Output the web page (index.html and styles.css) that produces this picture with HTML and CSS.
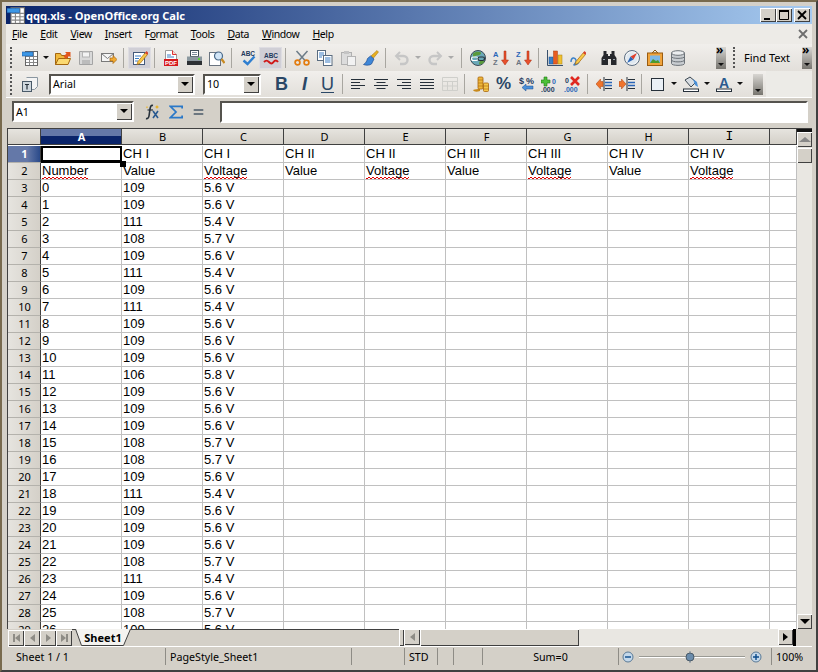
FILE: index.html
```html
<!DOCTYPE html>
<html lang="en">
<head>
    <meta charset="UTF-8">
    <title>qqq.xls - OpenOffice.org Calc</title>
    <link rel="stylesheet" href="styles.css">
</head>
<body>
    <svg class="defs" width="0" height="0">
        <symbol id="i-sheet" viewBox="0 0 16 16">
            <rect x="3.5" y="1.5" width="12" height="14" fill="#fff" stroke="#666"/>
            <path d="M7.5 2v13M11.5 2v13M4 6.5h11M4 9.5h11M4 12.5h11" stroke="#888"/>
            <rect x="0" y="2" width="11" height="4" fill="#3c97e6" stroke="#1e5fa8" stroke-width=".6"/>
        </symbol>
    </svg>
    <div class="window">
        <div class="titlebar">
            <svg class="title-icon" width="18" height="18"><use href="#i-sheet"/></svg>
            <span class="title-text">qqq.xls - OpenOffice.org Calc</span>
            <div class="win-btns">
                <span class="win-btn"><svg width="14" height="12"><path d="M3 9h6v2H3z" fill="#000"/></svg></span>
                <span class="win-btn"><svg width="14" height="12"><path d="M2.5 2.5h9v8h-9z M2 1.5h10" fill="none" stroke="#000"/><path d="M2 1h10v2H2z" fill="#000"/></svg></span>
                <span class="win-btn close"><svg width="14" height="12"><path d="M3 2l8 8M11 2l-8 8" stroke="#000" stroke-width="1.8"/></svg></span>
            </div>
        </div>

        <div class="menubar">
            <span class="menu-item"><u>F</u>ile</span>
            <span class="menu-item"><u>E</u>dit</span>
            <span class="menu-item"><u>V</u>iew</span>
            <span class="menu-item"><u>I</u>nsert</span>
            <span class="menu-item">F<u>o</u>rmat</span>
            <span class="menu-item"><u>T</u>ools</span>
            <span class="menu-item"><u>D</u>ata</span>
            <span class="menu-item"><u>W</u>indow</span>
            <span class="menu-item"><u>H</u>elp</span>
            <svg class="menu-close" width="10" height="10"><path d="M1 1l8 8M9 1l-8 8" stroke="#6e6e6e" stroke-width="1.8"/></svg>
        </div>

        <div class="toolbar">
            <div class="grip"></div>
            <span class="tb"><svg width="16" height="16"><use href="#i-sheet"/></svg></span>
            <span class="drop"></span>
            <span class="tb"><svg width="16" height="16" viewBox="0 0 16 16"><path d="M.5 3.5h5l1 2h6v9H.5z" fill="#f0b93c" stroke="#a4660f"/><path d="M3.5 8.5h12l-2.5 6H.5z" fill="#fbd971" stroke="#a4660f"/><path d="M8.5 6.5l3-3L10 2h5.5v5.5L14 6l-3 3z" fill="#e2561c"/></svg></span>
            <span class="tb"><svg width="16" height="16" viewBox="0 0 16 16"><path d="M1.5 1.5h13v13h-13z" fill="#d9d9d9" stroke="#a4a4a4"/><rect x="4.5" y="2" width="7" height="5" fill="#f3f3f3" stroke="#b4b4b4"/><rect x="4" y="10" width="8" height="4" fill="#bcbcbc"/></svg></span>
            <span class="tb"><svg width="16" height="16" viewBox="0 0 16 16"><rect x=".5" y="3.5" width="12" height="8" fill="#f5f5f5" stroke="#7a7a7a"/><path d="M.5 3.5l6 5 6-5" fill="none" stroke="#7a7a7a"/><path d="M9 8h3V5.5l4 4-4 4V11H9z" fill="#f2aa30" stroke="#a8660c" stroke-width=".7"/></svg></span>
            <span class="sep"></span>
            <span class="tb on"><svg width="16" height="16" viewBox="0 0 16 16"><rect x="1.5" y="2.5" width="11" height="12" fill="#fff" stroke="#44597a"/><path d="M3 6h6M3 8.5h4M3 11h3" stroke="#3a7cc4"/><path d="M6 11.5l7.5-9 2 2-7.5 9-3 1z" fill="#f7c94a" stroke="#a8660c" stroke-width=".7"/><path d="M13 3l1.5-2 2 2-1.5 1.8z" fill="#d8432e"/></svg></span>
            <span class="sep"></span>
            <span class="tb"><svg width="16" height="16" viewBox="0 0 16 16"><path d="M2.5.5h7l4 4v7h-11z" fill="#fff" stroke="#9a9a9a"/><path d="M9.5.5v4h4" fill="#ffd0c8" stroke="#d33"/><path d="M4 5h4M4 7h7" stroke="#3a7cc4"/><rect x="1" y="9" width="14" height="7" fill="#d6191c"/><text class="icon-text" x="8" y="14.7" font-size="6" fill="#fff" text-anchor="middle">PDF</text></svg></span>
            <span class="tb"><svg width="16" height="16" viewBox="0 0 16 16"><rect x="4.5" y=".5" width="8" height="6" fill="#fff" stroke="#3d4a55"/><path d="M6 2.5h5M6 4.5h5" stroke="#7a8a98"/><path d="M1 6.5h15v6H1z" fill="#8b989f"/><rect x="1" y="11" width="15" height="4" fill="#2c3034"/><rect x="12" y="8" width="2" height="2" fill="#5cd03c"/></svg></span>
            <span class="tb"><svg width="16" height="16" viewBox="0 0 16 16"><rect x=".5" y="2.5" width="11" height="13" fill="#fff" stroke="#6a7480"/><circle cx="9.5" cy="6" r="4" fill="#d2e6f8" stroke="#4a6a8a" stroke-width="1.2"/><path d="M12.5 9l3 4" stroke="#c98a20" stroke-width="2.2"/></svg></span>
            <span class="sep"></span>
            <span class="tb"><svg width="16" height="16" viewBox="0 0 16 16"><text class="icon-text" x="8" y="6" font-size="6.5" fill="#23395c" text-anchor="middle">ABC</text><path d="M3.5 10.5l4 3.5 7-7.5" stroke="#2f7fd0" stroke-width="2.4" fill="none"/></svg></span>
            <span class="tb on"><svg width="16" height="16" viewBox="0 0 16 16"><text class="icon-text" x="8" y="8" font-size="6.5" fill="#23395c" text-anchor="middle">ABC</text><path d="M1 12c2-2 3-2 5 0s3 2 4.5 0 3-2 4.5 0" stroke="#d01818" stroke-width="2" fill="none"/></svg></span>
            <span class="sep"></span>
            <span class="tb"><svg width="16" height="16" viewBox="0 0 16 16"><path d="M5 10.5L13.5 1M11 10.5L2.5 1" stroke="#6c7c88" stroke-width="1.5"/><circle cx="3.5" cy="12.5" r="2.4" fill="none" stroke="#e27c10" stroke-width="1.7"/><circle cx="12.5" cy="12.5" r="2.4" fill="none" stroke="#e27c10" stroke-width="1.7"/></svg></span>
            <span class="tb"><svg width="16" height="16" viewBox="0 0 16 16"><rect x=".5" y=".5" width="8" height="10" fill="#fff" stroke="#5a6c80"/><path d="M2 3h5M2 5h5M2 7h3" stroke="#3a7cc4"/><rect x="6.5" y="5.5" width="8.5" height="10" fill="#fff" stroke="#5a6c80"/><path d="M8 8h5.5M8 10h5.5M8 12h5.5" stroke="#3a7cc4"/></svg></span>
            <span class="tb"><svg width="16" height="16" viewBox="0 0 16 16"><rect x="1.5" y="2.5" width="10" height="12" fill="#dcdcdc" stroke="#b0b0b0"/><rect x="4" y="1" width="5" height="3" fill="#c4c4c4"/><rect x="7.5" y="6.5" width="8" height="9" fill="#f2f2f2" stroke="#b4b4b4"/></svg></span>
            <span class="tb"><svg width="16" height="16" viewBox="0 0 16 16"><path d="M14 .5l1.5 1.5-5 6-2.5-2z" fill="#e8b020" stroke="#9a6c10" stroke-width=".5"/><path d="M7.5 6l3.5 3-2.5 5c-2 1.5-5.5 1.5-8 .5 2-1 3.5-3.5 4-6z" fill="#3f87d8" stroke="#1f4f90" stroke-width=".7"/></svg></span>
            <span class="sep"></span>
            <span class="tb"><svg width="16" height="16" viewBox="0 0 16 16"><path d="M6 2L2 6l4 4" fill="none" stroke="#c6c6c6" stroke-width="2"/><path d="M3 6h6.5a4 4 0 010 8H6" fill="none" stroke="#c6c6c6" stroke-width="2.4"/></svg></span>
            <span class="drop off"></span>
            <span class="tb"><svg width="16" height="16" viewBox="0 0 16 16"><path d="M10 2l4 4-4 4" fill="none" stroke="#c6c6c6" stroke-width="2"/><path d="M13 6H6.5a4 4 0 000 8H10" fill="none" stroke="#c6c6c6" stroke-width="2.4"/></svg></span>
            <span class="drop off wide"></span>
            <span class="sep"></span>
            <span class="tb"><svg width="16" height="16" viewBox="0 0 16 16"><circle cx="8" cy="8" r="7.5" fill="#6aa8b8" stroke="#3c4a55"/><path d="M3 3.5c2-2 6-2.5 8-1 .5 2-2 3-4 3s-2 2-4 1.5zM10 11c2-.5 4 0 4.5.5-1 2-3 3-5 3-1-1 0-2.5.5-3.5z" fill="#5a9a3c"/><rect x="1.5" y="7" width="6.5" height="3.5" rx="1.7" fill="none" stroke="#fff" stroke-width="1.2"/><rect x="8" y="7" width="6.5" height="3.5" rx="1.7" fill="none" stroke="#26303a" stroke-width="1.2"/></svg></span>
            <span class="tb"><svg width="16" height="16" viewBox="0 0 16 16"><text class="icon-text" x="0" y="7" font-size="7.5" fill="#2a66b8">A</text><text class="icon-text" x="0" y="15" font-size="7.5" fill="#6a7480">Z</text><path d="M11 1h2v9h2.5L12 15l-3.5-5H11z" fill="#e8502c" stroke="#a82c10" stroke-width=".5"/></svg></span>
            <span class="tb"><svg width="16" height="16" viewBox="0 0 16 16"><text class="icon-text" x="0" y="7" font-size="7.5" fill="#2a66b8">Z</text><text class="icon-text" x="0" y="15" font-size="7.5" fill="#6a7480">A</text><path d="M11 1h2v9h2.5L12 15l-3.5-5H11z" fill="#e8502c" stroke="#a82c10" stroke-width=".5"/></svg></span>
            <span class="sep"></span>
            <span class="tb"><svg width="16" height="16" viewBox="0 0 16 16"><path d="M.5 0v15.5H16" fill="none" stroke="#38506c"/><rect x="2" y="7" width="4" height="7" fill="#3a80c8" stroke="#1f4f90" stroke-width=".5"/><rect x="6.5" y="1" width="4" height="13" fill="#e85c20" stroke="#a83c10" stroke-width=".5"/><rect x="11" y="5" width="4" height="9" fill="#f0c030" stroke="#a88010" stroke-width=".5"/></svg></span>
            <span class="tb"><svg width="16" height="16" viewBox="0 0 16 16"><path d="M1 12c0-5 4-5 5-2s-3 5-2 5 4-1 5-3" fill="none" stroke="#3a80c8" stroke-width="1.4"/><path d="M6 11.5l7.5-9 2 2-7.5 9-3 1z" fill="#f7c94a" stroke="#a8660c" stroke-width=".7"/><path d="M13 3l1.5-2 2 2-1.5 1.8z" fill="#d8432e"/></svg></span>
            <span class="sep blank"></span>
            <span class="tb"><svg width="16" height="16" viewBox="0 0 16 16"><path d="M2.5 1h3v3H7v2h2V4h1.5V1h3v4l2 3v7h-5.5V9H7v6H.5V8l2-3z" fill="#26282c"/><path d="M2 9.5h2M12 9.5h2" stroke="#9aa4ae"/></svg></span>
            <span class="tb"><svg width="16" height="16" viewBox="0 0 16 16"><circle cx="8" cy="8" r="7.5" fill="#f2f4f6" stroke="#5a6c80"/><circle cx="8" cy="8" r="5.8" fill="#dfe8f0"/><path d="M13 3L9.5 9.5 6.5 6.5z" fill="#e0402c"/><path d="M3 13l3.5-6.5 3 3z" fill="#2a66b8"/></svg></span>
            <span class="tb"><svg width="16" height="16" viewBox="0 0 16 16"><path d="M8 0L5 3h6z" fill="none" stroke="#8a5a14"/><rect x=".5" y="3" width="15" height="12.5" fill="#f0a43c" stroke="#9a5c10"/><rect x="3" y="5.5" width="10" height="7.5" fill="#7cb8e8"/><path d="M3 13l3-4 3 2 2-1 2 3z" fill="#4c9a30"/></svg></span>
            <span class="tb"><svg width="16" height="16" viewBox="0 0 16 16"><path d="M1.5 3v10.5c0 2.5 13 2.5 13 0V3z" fill="#c8ccd0" stroke="#6c7278"/><ellipse cx="8" cy="3" rx="6.5" ry="2.3" fill="#eceef0" stroke="#6c7278"/><path d="M1.5 6.5c0 2.5 13 2.5 13 0M1.5 10c0 2.5 13 2.5 13 0" fill="none" stroke="#6c7278"/></svg></span>
            <span class="tb-fill"></span>
            <span class="overflow tall"><b>&raquo;</b></span>
            <div class="grip find-grip"></div>
            <span class="find-text">Find Text</span>
            <span class="overflow tall"><b>&raquo;</b></span>
        </div>

        <div class="toolbar second">
            <div class="grip"></div>
            <span class="tb"><svg width="16" height="16" viewBox="0 0 16 16"><path d="M4.5 1.5h11v9l-3 3h-4" fill="#f4f4f4" stroke="#8a96a0"/><rect x=".5" y="5.5" width="9" height="10" fill="#d0d8de" stroke="#4a5a68"/><path d="M3 8.5h4M5 8.5v5" stroke="#26303a" stroke-width="1.2"/></svg></span>
            <span class="combo font-box"><span class="combo-value">Arial</span><span class="combo-btn"></span></span>
            <span class="combo size-box"><span class="combo-value">10</span><span class="combo-btn"></span></span>
            <span class="tb fmt fmt-b">B</span>
            <span class="tb fmt fmt-i">I</span>
            <span class="tb fmt fmt-u">U</span>
            <span class="sep narrow"></span>
            <span class="tb"><svg width="14" height="12" viewBox="0 0 14 12"><path d="M0 1.5h14M0 4.5h9M0 7.5h14M0 10.5h9" stroke="#26303a"/></svg></span>
            <span class="tb"><svg width="14" height="12" viewBox="0 0 14 12"><path d="M0 1.5h14M2.5 4.5h9M0 7.5h14M2.5 10.5h9" stroke="#26303a"/></svg></span>
            <span class="tb"><svg width="14" height="12" viewBox="0 0 14 12"><path d="M0 1.5h14M5 4.5h9M0 7.5h14M5 10.5h9" stroke="#26303a"/></svg></span>
            <span class="tb"><svg width="14" height="12" viewBox="0 0 14 12"><path d="M0 1.5h14M0 4.5h14M0 7.5h14M0 10.5h14" stroke="#26303a"/></svg></span>
            <span class="tb"><svg width="16" height="14" viewBox="0 0 16 14"><path d="M.5.5h15v13H.5zM.5 4.5h15M.5 9h15M5.5 4.5v9M10.5 4.5v9" fill="none" stroke="#cfcfcb"/></svg></span>
            <span class="sep"></span>
            <span class="tb"><svg width="16" height="16" viewBox="0 0 16 16"><path d="M0 14c2-1 5-1 7-1v2c-3 1-6 1-7-1z" fill="#c88a1c"/><rect x="5" y="1" width="5" height="12" rx="1" fill="#eeb73c" stroke="#a8660c" stroke-width=".8"/><path d="M5 4h5M5 7h5M5 10h5" stroke="#a8660c" stroke-width=".6"/><rect x="10.5" y="7" width="5" height="8.5" rx="1" fill="#f4c64c" stroke="#a8660c" stroke-width=".8"/><path d="M10.5 10h5M10.5 13h5" stroke="#a8660c" stroke-width=".6"/></svg></span>
            <span class="tb fmt fmt-pct">%</span>
            <span class="tb"><svg width="16" height="16" viewBox="0 0 16 16"><text class="icon-text" x="0" y="8" font-size="9" fill="#23395c">$</text><text class="icon-text" x="7" y="8" font-size="9" fill="#23395c">%</text><path d="M14 10H7V8l-4 3.5L7 15v-2h7z" fill="#4a90d8" stroke="#1f4f90" stroke-width=".5"/></svg></span>
            <span class="tb"><svg width="18" height="17" viewBox="0 0 18 17"><path d="M3 1h3v3h3v3H6v3H3V7H0V4h3z" fill="#4cc038" stroke="#1e7a16" stroke-width=".6"/><text class="icon-text" x="11" y="8" font-size="7" fill="#2a66b8">0</text><text class="icon-text" x="0" y="16" font-size="7" fill="#23395c">.000</text></svg></span>
            <span class="tb"><svg width="18" height="17" viewBox="0 0 18 17"><text class="icon-text" x="1" y="7" font-size="7" fill="#23395c">0</text><text class="icon-text" x="0" y="16" font-size="7" fill="#2a66b8">.000</text><path d="M7 1l8 8M15 1l-8 8" stroke="#e02820" stroke-width="2.6"/></svg></span>
            <span class="sep"></span>
            <span class="tb"><svg width="16" height="16" viewBox="0 0 16 16"><path d="M8 1v14" stroke="#26303a"/><path d="M9 3.5h7M9 12.5h7" stroke="#26303a"/><path d="M9 6.5h7M9 9.5h7" stroke="#2a66b8" stroke-width="1.5"/><path d="M7 5.5v5H4.5V13L0 8l4.5-5v2.5z" fill="#f0742c" stroke="#a8400c" stroke-width=".5"/></svg></span>
            <span class="tb"><svg width="16" height="16" viewBox="0 0 16 16"><path d="M8 1v14" stroke="#26303a"/><path d="M9 3.5h7M9 12.5h7" stroke="#26303a"/><path d="M9 6.5h7M9 9.5h7" stroke="#2a66b8" stroke-width="1.5"/><path d="M0 5.5v5h2.5V13L7 8 2.5 3v2.5z" fill="#f0742c" stroke="#a8400c" stroke-width=".5"/></svg></span>
            <span class="sep"></span>
            <span class="tb"><svg width="13" height="13" viewBox="0 0 13 13"><rect x=".5" y=".5" width="12" height="12" fill="#eaf0f6" stroke="#26303a"/></svg></span>
            <span class="drop"></span>
            <span class="tb"><svg width="16" height="16" viewBox="0 0 16 16"><path d="M2 4l5-3 6 5-5 5z" fill="#d8dde2" stroke="#3a4650"/><path d="M10 3l4 3 1 5-3-2z" fill="#4a90d8"/><rect x=".5" y="13" width="15" height="2.5" fill="#fff" stroke="#26303a"/></svg></span>
            <span class="drop"></span>
            <span class="tb"><svg width="16" height="16" viewBox="0 0 16 16"><text class="icon-text" x="8" y="11.5" font-size="14" fill="#2b5a8e" text-anchor="middle">A</text><rect x=".5" y="13" width="15" height="2.5" fill="#fff" stroke="#26303a"/></svg></span>
            <span class="drop"></span>
            <span class="overflow short"></span>
        </div>

        <div class="formula-bar">
            <span class="combo name-box"><span class="combo-value">A1</span><span class="combo-btn"></span></span>
            <span class="fx-btn"><svg width="18" height="18" viewBox="0 0 18 18"><path d="M9 2.5C7 2 6.5 3 6 6L5 13c-.3 2-1.5 3-3 2.5" fill="none" stroke="#26303a" stroke-width="1.6"/><path d="M3.5 7H9" stroke="#26303a" stroke-width="1.2"/><path d="M9 8l5 7M14 8l-5 7" stroke="#2a5a90" stroke-width="1.6"/><path d="M13 2l.7 1.3L15 4l-1.3.7L13 6l-.7-1.3L11 4l1.3-.7zM3 3l.4.8.8.4-.8.4L3 5.4l-.4-.8-.8-.4.8-.4z" fill="#e8b020"/></svg></span>
            <span class="fx-btn"><svg width="14" height="14" viewBox="0 0 16 16"><path d="M15 4V1.5H1.5L8 8l-6.5 6.5H15V12" fill="none" stroke="#2a78c8" stroke-width="2"/></svg></span>
            <span class="fx-btn"><svg width="11" height="8" viewBox="0 0 12 10"><path d="M0 2.5h12M0 7.5h12" stroke="#4a5a68" stroke-width="2"/></svg></span>
            <div class="formula-input"></div>
        </div>

        <div class="sheet-area">
            <div class="grid-pane">
                <div id="grid" class="grid"></div>
            </div>
            <div class="vscroll">
                <span class="sb-cap"></span>
                <span class="sb-btn"><span class="arrow up"></span></span>
                <span class="sb-thumb"></span>
                <span class="sb-track"></span>
                <span class="sb-btn"><span class="arrow down"></span></span>
            </div>
        </div>

        <div class="tab-row">
            <div class="tab-nav">
                <span class="sb-btn nav"><span class="bar"></span><span class="arrow left"></span></span>
                <span class="sb-btn nav"><span class="arrow left"></span></span>
                <span class="sb-btn nav"><span class="arrow right"></span></span>
                <span class="sb-btn nav"><span class="arrow right"></span><span class="bar"></span></span>
            </div>
            <div class="tab-strip">
                <div class="tab">
                    <svg class="tab-shape" width="56" height="17"><path d="M.5 0L6.5 16.5h42L55.5 0" fill="#f4f3f0" stroke="#404040"/></svg>
                    <span class="tab-label">Sheet1</span>
                </div>
            </div>
            <span class="splitter"></span>
            <div class="hscroll">
                <span class="sb-btn nav"><span class="arrow left"></span></span>
                <span class="sb-thumb wide"></span>
                <span class="sb-track"></span>
                <span class="sb-btn nav"><span class="arrow right dark"></span></span>
                <span class="sb-end"></span>
            </div>
        </div>

        <div class="statusbar">
            <span class="st st-sheet">Sheet 1 / 1</span>
            <span class="st st-page">PageStyle_Sheet1</span>
            <span class="st st-blank"></span>
            <span class="st st-mode">STD</span>
            <span class="st st-ins"></span>
            <span class="st st-sel"></span>
            <span class="st st-sum">Sum=0</span>
            <span class="st st-zoom">
                <svg width="146" height="14" viewBox="0 0 146 14">
                    <circle cx="11" cy="7" r="5" fill="#c4d8ea" stroke="#5a7a96"/><path d="M8 7h6" stroke="#0a4a8a" stroke-width="1.4"/>
                    <path d="M22 6.5h106" stroke="#9a9a94"/><path d="M22 7.5h106" stroke="#fff"/>
                    <path d="M73 1v12" stroke="#7a8a98"/><circle cx="73" cy="7" r="4" fill="#6a8cac" stroke="#4a5a68"/>
                    <circle cx="139" cy="7" r="5" fill="#c4d8ea" stroke="#5a7a96"/><path d="M136 7h6M139 4v6" stroke="#0a4a8a" stroke-width="1.4"/>
                </svg>
            </span>
            <span class="st st-pct">100%</span>
        </div>
    </div>
    <script src="sheet.js"></script>
</body>
</html>
```

FILE: styles.css
```css
* {
    box-sizing: border-box;
}
html, body {
    margin: 0;
    height: 100%;
    overflow: hidden;
}
body {
    font-family: "Noto Sans", Tahoma, sans-serif;
    font-size: 10.7px;
    color: #000;
}
.defs {
    position: absolute;
}
.window {
    width: 818px;
    height: 672px;
    padding: 4px;
    display: flex;
    flex-direction: column;
    background-color: #d4d0c8;
    border: 2px solid;
    border-color: #786a4e #404040 #404040 #786a4e;
}

/* title bar */
.titlebar {
    height: 18px;
    flex: none;
    display: flex;
    align-items: center;
    padding-left: 1px;
    background: linear-gradient(90deg, #0a246a, #a6caf0);
}
.title-icon {
    margin-right: 1px;
}
.title-text {
    color: white;
    font-weight: bold;
    font-size: 11.1px;
}
.win-btns {
    margin-left: auto;
    margin-right: 2px;
    display: flex;
}
.win-btn {
    width: 16px;
    height: 14px;
    display: flex;
    align-items: center;
    justify-content: center;
    background-color: #d4d0c8;
    box-shadow: inset 1px 1px #fff, inset -1px -1px #404040;
}
.win-btn.close {
    margin-left: 2px;
}

/* menu */
.menubar {
    height: 20px;
    flex: none;
    display: flex;
    align-items: center;
    padding-left: 6px;
    background-color: #edebe7;
    font-size: 10.5px;
    letter-spacing: -0.4px;
}
.menu-item {
    margin-right: 13px;
}
.menu-close {
    margin-left: auto;
    margin-right: 4px;
}

/* toolbars */
.toolbar {
    height: 27px;
    flex: none;
    display: flex;
    align-items: center;
    padding-left: 4px;
    background: linear-gradient(#f1efec, #e2dfda);
}
.toolbar.second {
    background: #ecebe7 linear-gradient(#f1efec, #e2dfda) no-repeat;
    background-size: 760px 100%;
    border-bottom: 1px solid #fff;
}
.grip {
    width: 2px;
    height: 21px;
    margin-right: 6px;
    border-left: 2px dotted #555;
}
.tb {
    width: 23px;
    height: 22px;
    flex: none;
    display: flex;
    align-items: center;
    justify-content: center;
}
.tb.on {
    background-color: #d0cfd6;
    box-shadow: inset 0 0 0 1px #dedde2;
}
.drop {
    width: 10px;
    height: 10px;
    flex: none;
    position: relative;
}
.drop::after {
    content: "";
    position: absolute;
    left: 2px;
    top: 3px;
    border: 3px solid transparent;
    border-top: 3px solid #111;
    border-bottom: 0;
}
.drop.off::after {
    border-top-color: #aaa;
}
.drop.wide {
    width: 12px;
}
.sep {
    width: 8px;
    height: 20px;
    flex: none;
    position: relative;
}
.sep::after {
    content: "";
    position: absolute;
    left: 3px;
    top: 0;
    bottom: 0;
    width: 1px;
    background-color: #a8a6a0;
}
.sep.blank::after {
    display: none;
}
.sep.narrow {
    width: 7px;
}
.tb-fill {
    flex: 1;
}
.overflow {
    width: 10px;
    flex: none;
    position: relative;
    color: #000;
    background: linear-gradient(#d8d6d2, #77756f);
}
.overflow b {
    position: absolute;
    left: 0;
    top: -4px;
    font-size: 12px;
    line-height: 14px;
}
.overflow::after {
    content: "";
    position: absolute;
    left: 2px;
    bottom: 3px;
    border: 3px solid transparent;
    border-top: 3px solid #111;
    border-bottom: 0;
}
.overflow.tall {
    height: 22px;
}
.overflow.short {
    height: 21px;
    margin-left: 8px;
}
.find-grip {
    margin-left: 7px;
    margin-right: 0;
}
.find-text {
    width: 67px;
    padding-left: 9px;
    font-size: 11px;
    white-space: nowrap;
}
.combo {
    height: 21px;
    flex: none;
    display: flex;
    align-items: center;
    justify-content: space-between;
    background-color: white;
    border: 2px solid;
    border-color: #55534e #fff #fff #55534e;
}
.combo-value {
    padding-left: 2px;
}
.combo-btn {
    width: 16px;
    height: 17px;
    position: relative;
    background-color: #d4d0c8;
    box-shadow: inset 1px 1px #fff, inset -1px -1px #404040;
}
.combo-btn::after {
    content: "";
    position: absolute;
    left: 4px;
    top: 6px;
    border: 4px solid transparent;
    border-top: 4px solid #000;
    border-bottom: 0;
}
.font-box {
    width: 146px;
    margin-left: 8px;
}
.size-box {
    width: 58px;
    margin-left: 8px;
    margin-right: 9px;
}
.fmt {
    color: #2a4766;
    font-family: "Liberation Sans", Arial, sans-serif;
    font-size: 18px;
    font-weight: bold;
}
.fmt-i {
    font-style: italic;
}
.fmt-u {
    font-weight: normal;
    text-decoration: underline;
    text-underline-offset: 2px;
}
.fmt-pct {
    font-size: 17px;
}
.icon-text {
    font-family: "Liberation Sans", Arial, sans-serif;
    font-weight: bold;
}

/* formula bar */
.formula-bar {
    height: 30px;
    flex: none;
    display: flex;
    align-items: center;
    padding: 0 4px 3px 6px;
}
.name-box {
    width: 122px;
    margin-right: 7px;
}
.fx-btn {
    width: 23px;
    height: 20px;
    flex: none;
    display: flex;
    align-items: center;
    justify-content: center;
}
.formula-input {
    width: 588px;
    height: 22px;
    margin-left: 10px;
    background-color: white;
    border: 2px solid;
    border-color: #55534e #fff #fff #55534e;
}

/* sheet */
.sheet-area {
    flex: 1;
    min-height: 0;
    display: flex;
    margin-left: 1px;
    border-top: 1px solid #404040;
}
.grid-pane {
    flex: 1;
    min-width: 0;
    overflow: hidden;
    background-color: white;
    border-left: 1px solid #404040;
}
.grid {
    display: grid;
    grid-template-columns: 33px repeat(9, 81px) 27px;
    grid-auto-rows: 17px;
    font-family: "Liberation Sans", Arial, sans-serif;
    font-size: 13px;
}
.cell {
    padding-left: 1px;
    line-height: 16px;
    white-space: nowrap;
    overflow: hidden;
    border-right: 1px solid #c0c0c0;
    border-bottom: 1px solid #c0c0c0;
}
/* red spell check wave, two rows of dashes */
.misspelt {
    display: inline-block;
    height: 16px;
    vertical-align: top;
    background-image: repeating-linear-gradient(90deg, #e00000 0 2px, transparent 2px 4px),
        repeating-linear-gradient(90deg, transparent 0 2px, #e00000 2px 4px);
    background-size: 100% 1px;
    background-position: 0 100%, 0 calc(100% - 1px);
    background-repeat: no-repeat;
}
.cell.active {
    position: relative;
    overflow: visible;
    border: 0;
    box-shadow: inset 0 0 0 2px #000, inset 0 -3px #000;
}
.cell.active::after {
    content: "";
    position: absolute;
    right: -4px;
    bottom: -4px;
    width: 6px;
    height: 6px;
    background-color: #000;
    z-index: 2;
}
.hd {
    font-family: "Noto Sans", Tahoma, sans-serif;
    font-size: 11px;
    text-align: center;
}
.col-hd {
    height: 16px;
    margin-bottom: 1px;
    line-height: 16px;
    background: linear-gradient(#e6e4df, #d4d0c8);
    border-right: 1px solid #404040;
    border-bottom: 1px solid #404040;
}
.col-hd.serif-i {
    font-family: "Liberation Mono", monospace;
    font-size: 13px;
}
.row-hd {
    line-height: 16px;
    background: linear-gradient(90deg, #e6e4df, #d4d0c8);
    border-right: 1px solid #404040;
    border-bottom: 1px solid #b4b2ac;
}
.col-hd.sel {
    color: white;
    font-weight: bold;
    background: linear-gradient(#6478a8 50%, #0a246a 50%);
}
.row-hd.sel {
    color: white;
    font-weight: bold;
    background: linear-gradient(90deg, #6478a8 60%, #2a4a8a);
}
.vscroll {
    width: 15px;
    flex: none;
    display: flex;
    flex-direction: column;
    background-color: #e9e7e2;
}
.sb-cap {
    height: 3px;
    background-color: #111;
}
.sb-btn {
    width: 15px;
    height: 15px;
    flex: none;
    display: flex;
    align-items: center;
    justify-content: center;
    background-color: #d4d0c8;
    box-shadow: inset 1px 1px #fff, inset -1px -1px #404040;
}
.sb-thumb {
    height: 15px;
    margin-top: 1px;
    flex: none;
    background-color: #d4d0c8;
    box-shadow: inset 1px 1px #fff, inset -1px -1px #404040;
}
.sb-track {
    flex: 1;
    background-color: #e9e7e2;
}
.arrow {
    width: 0;
    height: 0;
    border: 4px solid transparent;
}
.arrow.up {
    border-top: 0;
    border-left-width: 6px;
    border-right-width: 6px;
    border-bottom: 5px solid #888;
}
.arrow.down {
    border-bottom: 0;
    border-left-width: 5px;
    border-right-width: 5px;
    border-top: 5px solid #000;
}
.arrow.left {
    border-left: 0;
    border-right: 5px solid #8e8c86;
}
.arrow.right {
    border-right: 0;
    border-left: 5px solid #8e8c86;
}
.arrow.right.dark {
    border-left-color: #000;
}
.bar {
    width: 2px;
    height: 8px;
    background-color: #8e8c86;
}

/* tabs */
.tab-row {
    height: 18px;
    flex: none;
    display: flex;
    margin-left: 2px;
    border-bottom: 1px solid #fff;
}
.tab-nav {
    display: flex;
    padding-top: 1px;
}
.sb-btn.nav {
    width: 16px;
    height: 16px;
}
.tab-strip {
    width: 327px;
    padding-left: 3px;
    border-top: 1px solid #404040;
}
.tab {
    width: 56px;
    height: 17px;
    margin-top: -1px;
    position: relative;
    text-align: center;
}
.tab-shape {
    position: absolute;
    left: 0;
    top: 0;
}
.tab-label {
    position: relative;
    font-weight: bold;
    font-size: 11px;
    line-height: 17px;
}
.splitter {
    width: 5px;
    background-color: #d4d0c8;
    box-shadow: inset 1px 1px #fff, inset -1px -1px #404040;
}
.hscroll {
    width: 408px;
    display: flex;
    background-color: #e9e7e2;
}
.hscroll .sb-btn.nav {
    width: 15px;
}
.hscroll .sb-btn:first-child {
    width: 16px;
}
.sb-thumb.wide {
    width: 159px;
    height: 17px;
    margin-top: 0;
}
.sb-end {
    width: 19px;
    background: linear-gradient(90deg, #000 3px, #d4d0c8 3px);
}

/* status bar */
.statusbar {
    height: 19px;
    flex: none;
    display: flex;
    align-items: center;
}
.st {
    height: 17px;
    flex: none;
    display: flex;
    align-items: center;
    white-space: nowrap;
    border-right: 1px solid #8e8c86;
}
.st-sheet {
    width: 160px;
    padding-left: 10px;
}
.st-page {
    width: 186px;
    padding-left: 4px;
}
.st-blank {
    width: 53px;
}
.st-mode {
    width: 33px;
    padding-left: 4px;
}
.st-ins {
    width: 16px;
}
.st-sel {
    width: 29px;
}
.st-sum {
    width: 136px;
    justify-content: center;
}
.st-zoom {
    width: 153px;
}
.st-zoom svg {
    margin-left: -2px;
}
.st-pct {
    border-right: 0;
    padding-left: 4px;
}
```

FILE: sheet.js
```js
// builds the cells so the html doesn't get 300 lines of divs
const grid = document.getElementById("grid");
const values = [109, 109, 111, 108, 109, 111, 109, 111, 109, 109, 109, 106, 109, 109,
    109, 108, 108, 109, 111, 109, 109, 109, 108, 111, 109, 108, 109];
const volts = { 106: "5.8 V", 108: "5.7 V", 109: "5.6 V", 111: "5.4 V" };
const columns = ["A", "B", "C", "D", "E", "F", "G", "H", "I", ""];
const firstRow = ["", "CH I", "CH I", "CH II", "CH II", "CH III", "CH III", "CH IV", "CH IV", ""];
const secondRow = ["Number", "Value", "Voltage", "Value", "Voltage", "Value", "Voltage", "Value", "Voltage", ""];

function addCell(text, className) {
    let cell = document.createElement("div");
    cell.className = className;
    cell.textContent = text;
    grid.appendChild(cell);
    return cell;
}

addCell("", "cell hd col-hd");
columns.forEach(col => {
    let name = "cell hd col-hd";
    if (col === "A") name += " sel";
    if (col === "I") name += " serif-i";
    addCell(col, name);
});

addCell("1", "cell hd row-hd sel");
firstRow.forEach((text, i) => addCell(text, i === 0 ? "cell active" : "cell"));

addCell("2", "cell hd row-hd");
secondRow.forEach(text => {
    let cell = addCell("", "cell");
    let span = document.createElement("span");
    span.textContent = text;
    if (text === "Number" || text === "Voltage") span.className = "misspelt";
    cell.appendChild(span);
});

values.forEach((value, i) => {
    addCell(String(i + 3), "cell hd row-hd");
    addCell(String(i), "cell");
    addCell(String(value), "cell");
    addCell(volts[value], "cell");
    for (let c = 3; c < columns.length; c++) addCell("", "cell");
});
```
